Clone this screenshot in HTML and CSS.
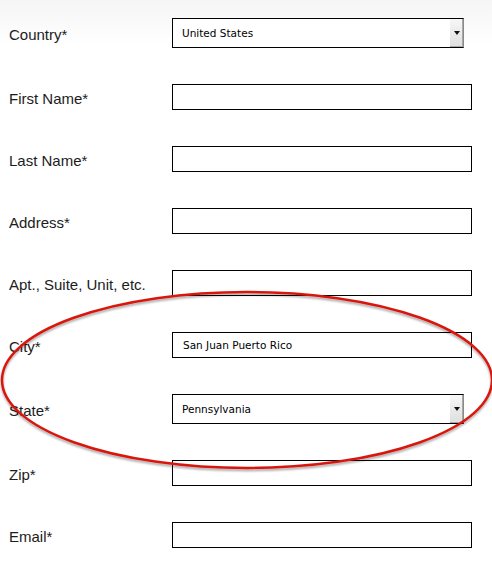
FILE: index.html
```html
<!DOCTYPE html>
<html lang="en">
<head>
  <meta charset="UTF-8">
  <title>Shipping Address</title>
  <link rel="stylesheet" href="styles.css">
</head>
<body>
  <form class="address-form">
    <div class="row">
      <label class="label">Country*</label>
      <div class="select">
        <select><option>United States</option></select>
        <span class="select-btn"><span class="arrow"></span></span>
      </div>
    </div>
    <div class="row">
      <label class="label">First Name*</label>
      <input class="field" type="text">
    </div>
    <div class="row">
      <label class="label">Last Name*</label>
      <input class="field" type="text">
    </div>
    <div class="row">
      <label class="label">Address*</label>
      <input class="field" type="text">
    </div>
    <div class="row">
      <label class="label">Apt., Suite, Unit, etc.</label>
      <input class="field" type="text">
    </div>
    <div class="row">
      <label class="label">City*</label>
      <input class="field" type="text" value="San Juan Puerto Rico">
    </div>
    <div class="row">
      <label class="label">State*</label>
      <div class="select">
        <select><option>Pennsylvania</option></select>
        <span class="select-btn"><span class="arrow"></span></span>
      </div>
    </div>
    <div class="row">
      <label class="label">Zip*</label>
      <input class="field" type="text">
    </div>
    <div class="row">
      <label class="label">Email*</label>
      <input class="field" type="text">
    </div>
  </form>

  <!-- red marker drawn over the city / state rows -->
  <svg class="marker" width="492" height="572" viewBox="0 0 492 572">
    <defs>
      <filter id="shadow" x="-10%" y="-10%" width="120%" height="130%">
        <feDropShadow dx="0" dy="2" stdDeviation="1.2" flood-color="#000" flood-opacity="0.35"/>
      </filter>
    </defs>
    <ellipse cx="247" cy="380" rx="245" ry="88" fill="none" stroke="#d8180d" stroke-width="2.5" filter="url(#shadow)"/>
  </svg>
</body>
</html>
```

FILE: styles.css
```css
body {
  margin: 0;
  font-family: "Liberation Sans", Arial, sans-serif;
  background: #fff linear-gradient(#f5f5f5, #fff 45px) no-repeat;
}
.address-form {
  padding: 18px 0 0 9px;
}
.row {
  display: flex;
  align-items: center;
  margin-bottom: 36px;
}
.label {
  width: 163px;
  padding-top: 3px;
  font-size: 15px;
  color: #1c1c1c;
}
.field {
  width: 300px;
  height: 26px;
  box-sizing: border-box;
  margin: 0;
  padding: 0 0 0 10px;
  border: 1px solid #000;
  border-radius: 0;
  outline: none;
  background: #fff;
  font-family: "DejaVu Sans", Verdana, sans-serif;
  font-size: 10.5px;
  color: #000;
}
.select {
  display: flex;
  width: 292px;
  height: 30px;
  box-sizing: border-box;
  border: 1px solid #000;
  border-right-color: #8a8a8a;
  background: #fff;
}
.select select {
  flex: 1;
  appearance: none;
  -webkit-appearance: none;
  border: none;
  outline: none;
  background: #fff;
  margin: 0;
  padding: 0 0 0 9px;
  font-family: "DejaVu Sans", Verdana, sans-serif;
  font-size: 10.5px;
  color: #000;
}
.select-btn {
  display: flex;
  align-items: center;
  justify-content: center;
  width: 13px;
  background: linear-gradient(#f7f7f7, #dedede);
  box-shadow: inset -1px -1px 0 #a8a8a8;
}
.arrow {
  width: 0;
  height: 0;
  border-left: 3px solid transparent;
  border-right: 3px solid transparent;
  border-top: 4px solid #111;
}
.marker {
  position: absolute;
  top: 0;
  left: 0;
  pointer-events: none;
}
```
